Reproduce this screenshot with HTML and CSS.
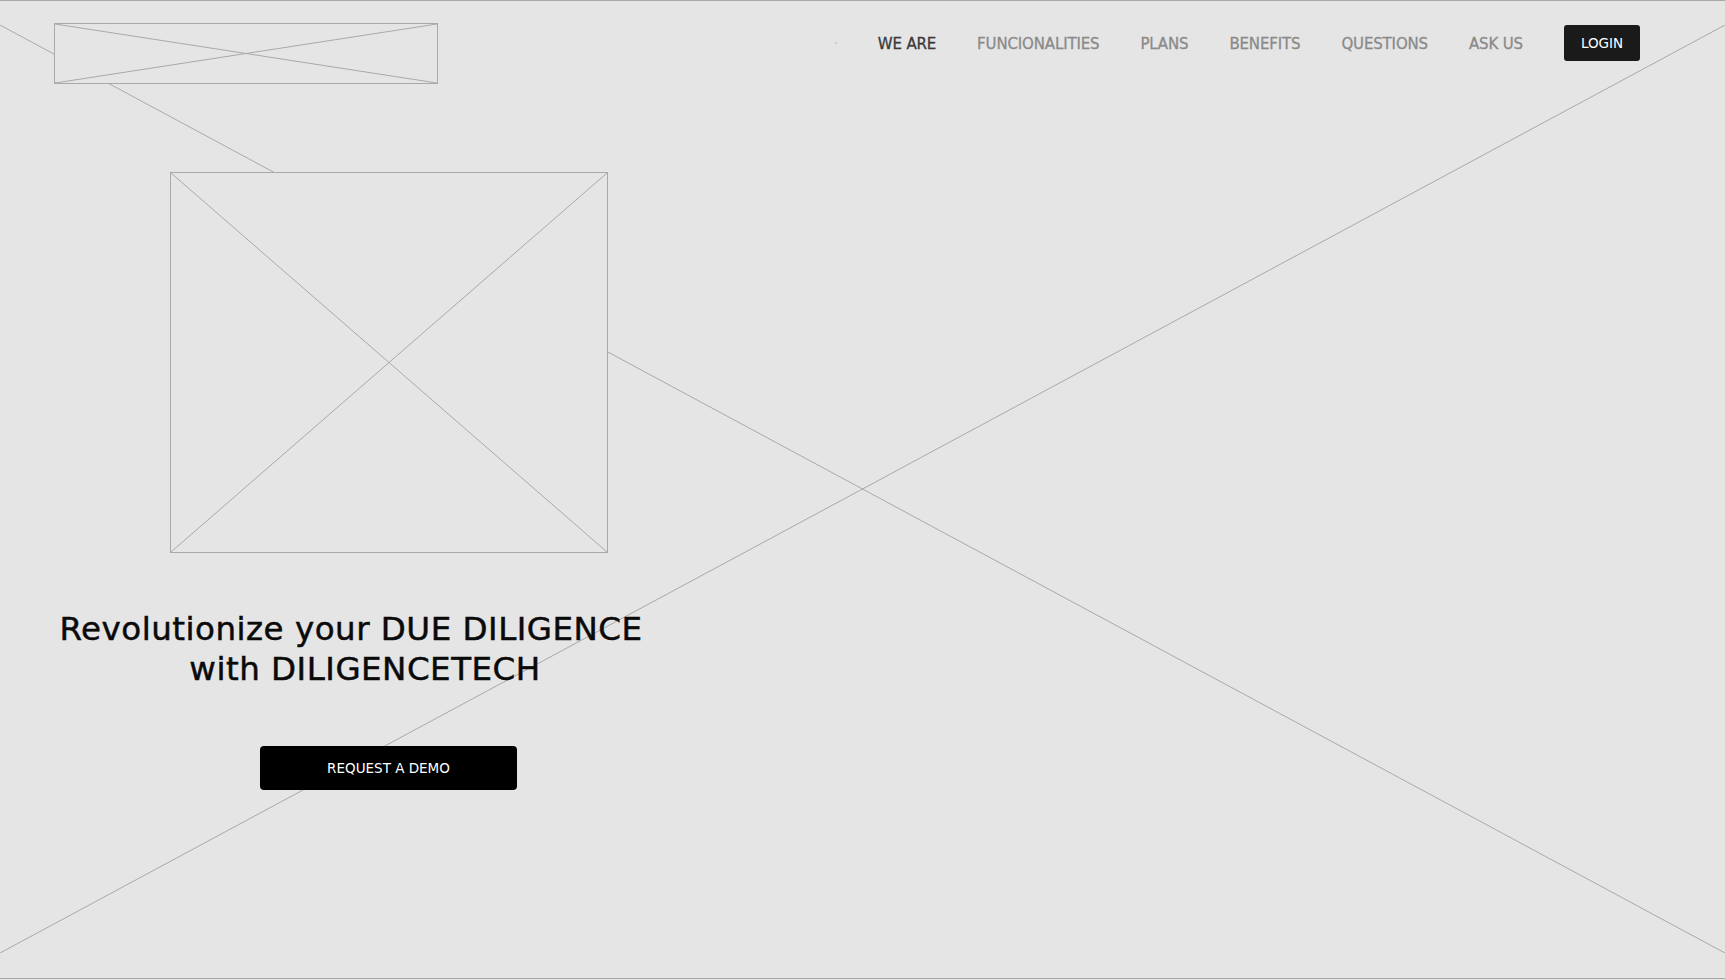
FILE: index.html
```html
<!DOCTYPE html>
<html lang="en">
<head>
<meta charset="utf-8">
<title>DiligenceTech</title>
<link rel="stylesheet" href="styles.css">
</head>
<body>
<div class="page">
  <svg class="bg-x" viewBox="0 0 1725 928" preserveAspectRatio="none" aria-hidden="true">
    <line x1="0" y1="0" x2="1725" y2="928" />
    <line x1="1725" y1="0" x2="0" y2="928" />
  </svg>

  <header class="topbar">
    <div class="logo ph">
      <svg viewBox="0 0 100 100" preserveAspectRatio="none" aria-hidden="true">
        <line x1="0" y1="0" x2="100" y2="100" />
        <line x1="100" y1="0" x2="0" y2="100" />
      </svg>
    </div>
    <nav class="nav">
      <span class="nav-dot"></span>
      <a class="nav-link active" href="#">WE ARE</a>
      <a class="nav-link" href="#">FUNCIONALITIES</a>
      <a class="nav-link" href="#">PLANS</a>
      <a class="nav-link" href="#">BENEFITS</a>
      <a class="nav-link" href="#">QUESTIONS</a>
      <a class="nav-link" href="#">ASK US</a>
      <a class="login-btn" href="#">LOGIN</a>
    </nav>
  </header>

  <main class="hero">
    <div class="hero-img ph">
      <svg viewBox="0 0 100 100" preserveAspectRatio="none" aria-hidden="true">
        <line x1="0" y1="0" x2="100" y2="100" />
        <line x1="100" y1="0" x2="0" y2="100" />
      </svg>
    </div>
    <h1 class="hero-title">
      <span class="line1">Revolutionize your DUE DILIGENCE</span>
      <span class="line2">with DILIGENCETECH</span>
    </h1>
    <a class="demo-btn" href="#">REQUEST A DEMO</a>
  </main>
</div>
</body>
</html>
```

FILE: styles.css
```css
* { box-sizing: border-box; }

html, body {
  margin: 0;
  padding: 0;
  background: #e5e5e5;
}

body {
  font-family: "DejaVu Sans", "Liberation Sans", sans-serif;
}

.page {
  position: relative;
  height: 979px;
  border-top: 1px solid #a8a8a8;
  border-bottom: 1px solid #a8a8a8;
  overflow: hidden;
}

.bg-x {
  position: absolute;
  left: 0;
  top: 24px;
  width: 100%;
  height: 928px;
  z-index: 0;
}

.bg-x line,
.ph line {
  stroke: #a9a9a9;
  stroke-width: 1;
  vector-effect: non-scaling-stroke;
}

.ph {
  position: relative;
  z-index: 1;
  background: #e5e5e5;
  border: 1px solid #a9a9a9;
}

.ph svg {
  display: block;
  width: 100%;
  height: 100%;
}

.topbar {
  position: relative;
  z-index: 1;
  display: flex;
  justify-content: space-between;
  align-items: flex-start;
  padding: 22px 85px 0 54px;
}

.logo {
  width: 384px;
  height: 61px;
}

.nav {
  display: flex;
  align-items: center;
  gap: 41px;
  margin-top: 2px;
  height: 36px;
}

.nav-dot {
  width: 2px;
  height: 2px;
  background: #c4c4c4;
  border-radius: 50%;
}

.nav-link {
  font-size: 15px;
  line-height: 18px;
  padding-top: 2px;
  color: #8a8a8a;
  text-decoration: none;
  letter-spacing: -0.15px;
  -webkit-text-stroke: 0.3px currentColor;
}

.nav-link.active {
  color: #3a3a3a;
}

.login-btn {
  display: flex;
  align-items: center;
  justify-content: center;
  width: 76px;
  height: 36px;
  padding-bottom: 1px;
  background: #1a1a1a;
  color: #ffffff;
  border-radius: 3px;
  font-size: 13.5px;
  text-decoration: none;
}

.hero {
  position: relative;
  z-index: 1;
  padding-left: 54px;
  margin-top: 88px;
}

.hero-img {
  margin-left: 116px;
  width: 438px;
  height: 381px;
}

.hero-title {
  margin: 56px 0 0 0;
  width: 594px;
  text-align: center;
  font-size: 32.5px;
  font-weight: normal;
  line-height: 40px;
  letter-spacing: 0.5px;
  color: #0a0a0a;
  -webkit-text-stroke: 0.5px currentColor;
}

.hero-title span {
  display: block;
  white-space: nowrap;
}

.hero-title .line2 {
  padding-left: 28px;
}

.demo-btn {
  display: flex;
  align-items: center;
  justify-content: center;
  margin: 57px 0 0 206px;
  width: 257px;
  height: 44px;
  background: #000000;
  color: #ffffff;
  border-radius: 4px;
  font-size: 13.5px;
  text-decoration: none;
}
```
